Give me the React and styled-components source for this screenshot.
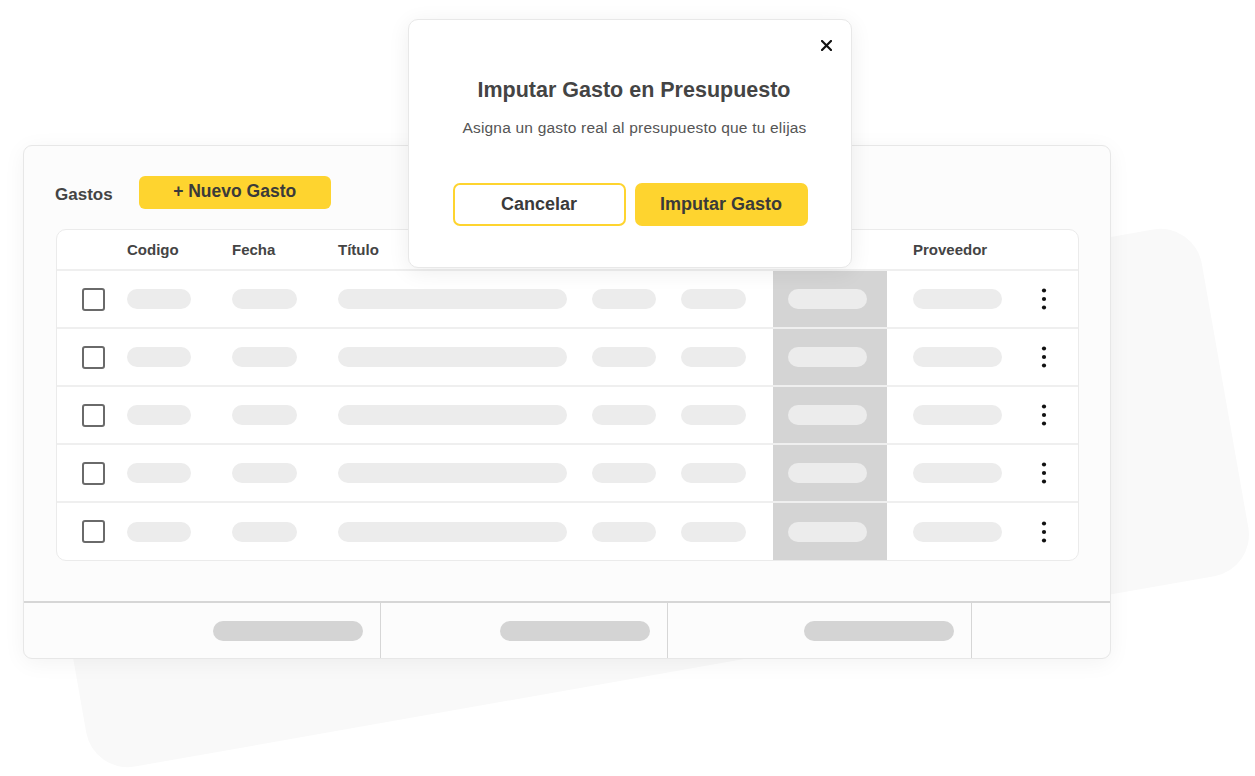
import React from "react";
import styled, { createGlobalStyle } from "styled-components";

const GlobalStyle = createGlobalStyle`
  *, *::before, *::after { box-sizing: border-box; }
  html, body { margin: 0; padding: 0; background: #ffffff; }
  body {
    font-family: "Liberation Sans", Arial, "Helvetica Neue", sans-serif;
    color: #3f3f3f;
    -webkit-font-smoothing: antialiased;
  }
`;

const YELLOW = "#fed42f";

const Stage = styled.div`
  position: relative;
  width: 1255px;
  height: 776px;
  overflow: hidden;
  padding: 145px 0 0 23px;
`;

/* soft tilted sheet lying behind the card */
const Backdrop = styled.div`
  position: absolute;
  left: 54px;
  top: 322px;
  width: 1180px;
  height: 352px;
  border-radius: 42px;
  background: #f9f9f9;
  transform: rotate(-10deg);
  z-index: 0;
`;

const Card = styled.section`
  position: relative;
  z-index: 1;
  width: 1088px;
  height: 514px;
  display: flex;
  flex-direction: column;
  background: #fcfcfc;
  border: 1px solid #e7e7e7;
  border-radius: 9px;
  box-shadow: 0 4px 22px rgba(0, 0, 0, 0.05);
`;

const CardHeader = styled.header`
  display: flex;
  align-items: center;
  gap: 25px;
  padding: 30px 31px 20px 31px;
`;

const CardTitle = styled.h2`
  margin: 4px 0 0;
  font-size: 17px;
  font-weight: 700;
  color: #444444;
`;

const AddButton = styled.button`
  width: 192px;
  height: 33px;
  margin-left: 1px;
  border: none;
  border-radius: 6px;
  background: ${YELLOW};
  color: #3a3a3a;
  font-family: inherit;
  font-size: 17.5px;
  font-weight: 700;
  padding: 0 0 2px;
`;

const Table = styled.div`
  margin: 0 31px 0 32px;
  background: #ffffff;
  border: 1px solid #ebebeb;
  border-radius: 10px;
  overflow: hidden;
`;

const gridColumns = "70px 105px 106px 254px 89px 92px 114px 132px 1fr";

const HeaderRow = styled.div`
  display: grid;
  grid-template-columns: ${gridColumns};
  height: 39px;
  align-items: center;
`;

const HeadCell = styled.div`
  padding-left: ${(p) => p.$pad || 0}px;
  padding-bottom: 1px;
  font-size: 15px;
  font-weight: 700;
  color: #444444;
`;

const Row = styled.div`
  display: grid;
  grid-template-columns: ${gridColumns};
  height: 58px;
  border-top: 2px solid #efefef;

  &:last-child {
    height: 59px;
  }
`;

const Cell = styled.div`
  display: flex;
  align-items: center;
  padding-left: ${(p) => p.$pad || 0}px;
  background: ${(p) => (p.$highlight ? "#d4d4d4" : "transparent")};
`;

const Pill = styled.span`
  display: block;
  width: ${(p) => p.$w}px;
  height: 20px;
  border-radius: 10px;
  background: #ececec;
`;

const Checkbox = styled.span`
  display: block;
  width: 23px;
  height: 23px;
  border: 2.5px solid #6a6a6a;
  border-radius: 3px;
  background: #ffffff;
`;

const MenuDots = () => (
  <svg width="6" height="22" viewBox="0 0 6 22" aria-hidden="true">
    <circle cx="3" cy="2.5" r="2.1" fill="#111" />
    <circle cx="3" cy="11" r="2.1" fill="#111" />
    <circle cx="3" cy="19.5" r="2.1" fill="#111" />
  </svg>
);

const Spacer = styled.div`
  flex: 1;
`;

const Footer = styled.footer`
  display: grid;
  grid-template-columns: 356px 287px 304px 1fr;
  height: 57px;
  border-top: 2px solid #d6d6d6;
`;

const FooterCell = styled.div`
  display: flex;
  align-items: center;
  justify-content: flex-end;
  padding-right: 17px;
  border-left: ${(p) => (p.$first ? "none" : "1.5px solid #d6d6d6")};
`;

const FooterPill = styled.span`
  display: block;
  width: 150px;
  height: 20px;
  border-radius: 10px;
  background: #d4d4d4;
`;

const Modal = styled.div`
  position: absolute;
  z-index: 2;
  left: 408px;
  top: 19px;
  width: 444px;
  height: 249px;
  display: flex;
  flex-direction: column;
  align-items: center;
  padding-top: 58px;
  background: #ffffff;
  border: 1px solid #e8e8e8;
  border-radius: 10px;
  box-shadow: 0 4px 22px rgba(0, 0, 0, 0.07);
`;

const CloseButton = styled.button`
  position: absolute;
  top: 18px;
  right: 18px;
  width: 14px;
  height: 14px;
  padding: 0;
  border: none;
  background: transparent;
  display: flex;
  align-items: center;
  justify-content: center;
`;

const ModalTitle = styled.h1`
  margin: 0 0 0 8px;
  font-size: 21.5px;
  line-height: 24px;
  font-weight: 700;
  color: #444444;
`;

const ModalText = styled.p`
  margin: 17px 0 0 9px;
  font-size: 15.5px;
  line-height: 18px;
  letter-spacing: 0.2px;
  color: #555555;
`;

const ModalActions = styled.div`
  display: flex;
  gap: 9px;
  margin-top: 46px;
`;

const BaseButton = styled.button`
  width: 173px;
  height: 43px;
  border-radius: 7px;
  font-family: inherit;
  font-size: 18px;
  font-weight: 700;
  color: #3a3a3a;
  padding: 0 0 1px;
`;

const OutlineButton = styled(BaseButton)`
  background: #ffffff;
  border: 2px solid ${YELLOW};
`;

const PrimaryButton = styled(BaseButton)`
  background: ${YELLOW};
  border: none;
`;

const columns = [
  { pad: 0, w: 64 },
  { pad: 0, w: 65 },
  { pad: 0, w: 229 },
  { pad: 0, w: 64 },
  { pad: 0, w: 65 },
  { pad: 15, w: 79, highlight: true },
  { pad: 26, w: 89 },
];

const headers = [
  { label: "", pad: 0 },
  { label: "Codigo", pad: 0 },
  { label: "Fecha", pad: 0 },
  { label: "Título", pad: 0 },
  { label: "", pad: 0 },
  { label: "", pad: 0 },
  { label: "", pad: 0 },
  { label: "Proveedor", pad: 26 },
  { label: "", pad: 0 },
];

const rows = [1, 2, 3, 4, 5];

export default function App() {
  return (
    <>
      <GlobalStyle />
      <Stage>
        <Backdrop />
        <Card>
          <CardHeader>
            <CardTitle>Gastos</CardTitle>
            <AddButton>+ Nuevo Gasto</AddButton>
          </CardHeader>
          <Table>
            <HeaderRow>
              {headers.map((h, i) => (
                <HeadCell key={i} $pad={h.pad}>
                  {h.label}
                </HeadCell>
              ))}
            </HeaderRow>
            {rows.map((r) => (
              <Row key={r}>
                <Cell $pad={25}>
                  <Checkbox />
                </Cell>
                {columns.map((c, i) => (
                  <Cell key={i} $pad={c.pad} $highlight={c.highlight}>
                    <Pill $w={c.w} />
                  </Cell>
                ))}
                <Cell $pad={22}>
                  <MenuDots />
                </Cell>
              </Row>
            ))}
          </Table>
          <Spacer />
          <Footer>
            <FooterCell $first>
              <FooterPill />
            </FooterCell>
            <FooterCell>
              <FooterPill />
            </FooterCell>
            <FooterCell>
              <FooterPill />
            </FooterCell>
            <FooterCell />
          </Footer>
        </Card>
        <Modal role="dialog">
          <CloseButton aria-label="Cerrar">
            <svg width="11" height="11" viewBox="0 0 11 11">
              <path d="M1 1 L10 10 M10 1 L1 10" stroke="#111" strokeWidth="2.2" strokeLinecap="square" />
            </svg>
          </CloseButton>
          <ModalTitle>Imputar Gasto en Presupuesto</ModalTitle>
          <ModalText>Asigna un gasto real al presupuesto que tu elijas</ModalText>
          <ModalActions>
            <OutlineButton>Cancelar</OutlineButton>
            <PrimaryButton>Imputar Gasto</PrimaryButton>
          </ModalActions>
        </Modal>
      </Stage>
    </>
  );
}
